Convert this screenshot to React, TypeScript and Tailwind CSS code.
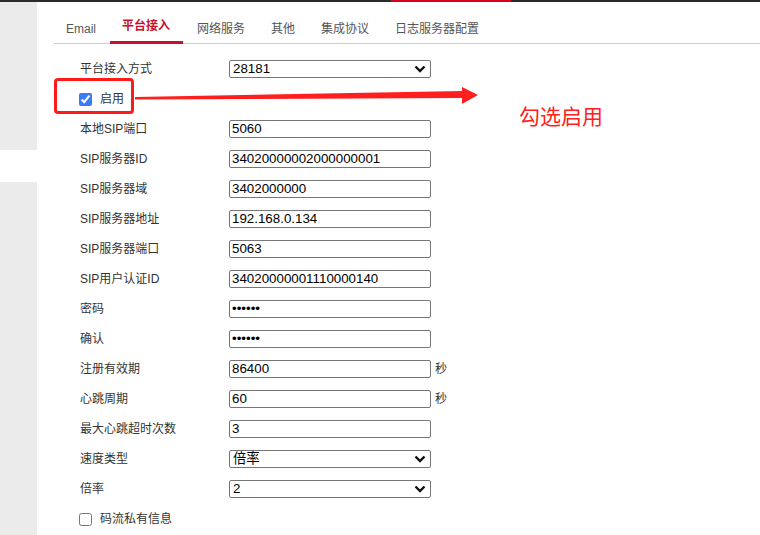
import { useState } from 'react';

type Row = {
    label: string;
    kind: 'text' | 'password' | 'select' | 'check';
    value?: string;
    unit?: string;
    checked?: boolean;
};

const rows: Row[] = [
    { label: '平台接入方式', kind: 'select', value: '28181' },
    { label: '启用', kind: 'check', checked: true },
    { label: '本地SIP端口', kind: 'text', value: '5060' },
    { label: 'SIP服务器ID', kind: 'text', value: '34020000002000000001' },
    { label: 'SIP服务器域', kind: 'text', value: '3402000000' },
    { label: 'SIP服务器地址', kind: 'text', value: '192.168.0.134' },
    { label: 'SIP服务器端口', kind: 'text', value: '5063' },
    { label: 'SIP用户认证ID', kind: 'text', value: '34020000001110000140' },
    { label: '密码', kind: 'password', value: '123456' },
    { label: '确认', kind: 'password', value: '123456' },
    { label: '注册有效期', kind: 'text', value: '86400', unit: '秒' },
    { label: '心跳周期', kind: 'text', value: '60', unit: '秒' },
    { label: '最大心跳超时次数', kind: 'text', value: '3' },
    { label: '速度类型', kind: 'select', value: '倍率' },
    { label: '倍率', kind: 'select', value: '2' },
    { label: '码流私有信息', kind: 'check', checked: false },
];

const tabs = ['Email', '平台接入', '网络服务', '其他', '集成协议', '日志服务器配置'];

function Chevron() {
    return (
        <svg
            width="12"
            height="8"
            viewBox="0 0 12 8"
            className="pointer-events-none absolute right-[5px] top-[5px]"
        >
            <path d="M1.5 1.5 L6 6 L10.5 1.5" fill="none" stroke="#111" strokeWidth="2.4" />
        </svg>
    );
}

function Field({ row }: { row: Row }) {
    if (row.kind === 'select') {
        return (
            <div className="relative mb-px h-[18px] w-[202px]">
                <select
                    defaultValue={row.value}
                    className="h-[18px] w-[202px] appearance-none rounded-[2px] border border-[#767676] bg-white pl-[3px] text-[13.33px] leading-[16px] text-black outline-none"
                >
                    <option value={row.value}>{row.value}</option>
                </select>
                <Chevron />
            </div>
        );
    }
    return (
        <input
            type={row.kind === 'password' ? 'password' : 'text'}
            defaultValue={row.value}
            className="mb-px h-[18px] w-[202px] rounded-[2px] border border-[#767676] bg-white px-[2px] text-[13.33px] leading-[16px] text-black outline-none"
        />
    );
}

export default function App() {
    const [active] = useState(1);

    return (
        <div className="relative h-[535px] w-[760px] overflow-hidden bg-white font-['Liberation_Sans','Noto_Sans_CJK_SC',sans-serif] text-[12px] text-[#333]">
            {/* top bar */}
            <div className="flex h-[2px] bg-[#2b2b2b]">
                <div className="ml-[391px] w-[120px] bg-[#d7001f]" />
            </div>

            <div className="flex h-[533px]">
                {/* left strip */}
                <div className="flex w-[37px] flex-col">
                    <div className="h-[148px] bg-[#ebebeb]" />
                    <div className="h-[32px] bg-white" />
                    <div className="flex-1 bg-[#ebebeb]" />
                </div>

                <div className="flex-1">
                    {/* tabs */}
                    <div className="ml-[17px] flex h-[42px] gap-[2px] border-b border-[#cccccc]">
                        {tabs.map((t, i) => (
                            <div
                                key={t}
                                className={
                                    i === active
                                        ? 'flex h-[42px] items-center border-b-[3px] border-[#c8102e] pl-3 pr-[13px] pt-[8px] font-bold text-[#c8102e]'
                                        : 'flex h-[42px] items-center px-3 pt-[11px] text-[#555]'
                                }
                            >
                                {t}
                            </div>
                        ))}
                    </div>

                    {/* form */}
                    <div className="pt-[10px]">
                        {rows.map((row) => (
                            <div key={row.label} className="flex h-[30px] items-center">
                                {row.kind === 'check' ? (
                                    <label className="ml-[42px] flex items-center gap-[8px]">
                                        <input
                                            type="checkbox"
                                            defaultChecked={row.checked}
                                            className="m-0 h-[13px] w-[13px] accent-[#3b7cf5]"
                                        />
                                        <span>{row.label}</span>
                                    </label>
                                ) : (
                                    <>
                                        <div className="w-[192px] pl-[43px]">{row.label}</div>
                                        <Field row={row} />
                                        {row.unit ? <span className="ml-[4px]">{row.unit}</span> : null}
                                    </>
                                )}
                            </div>
                        ))}
                    </div>
                </div>
            </div>

            {/* annotation */}
            <div className="absolute left-[54px] top-[78px] h-[36px] w-[80px] rounded-[4px] border-[3px] border-[#ff1a1a]" />
            <svg className="absolute left-0 top-0" width="760" height="535">
                <polygon
                    points="135,97 462,91 462,87 478,95 462,104 462,98 135,99.5"
                    fill="#ff1f1f"
                />
            </svg>
            <div className="absolute left-[519px] top-[104px] text-[21px] leading-[26px] text-[#ff2020]">
                勾选启用
            </div>
        </div>
    );
}
